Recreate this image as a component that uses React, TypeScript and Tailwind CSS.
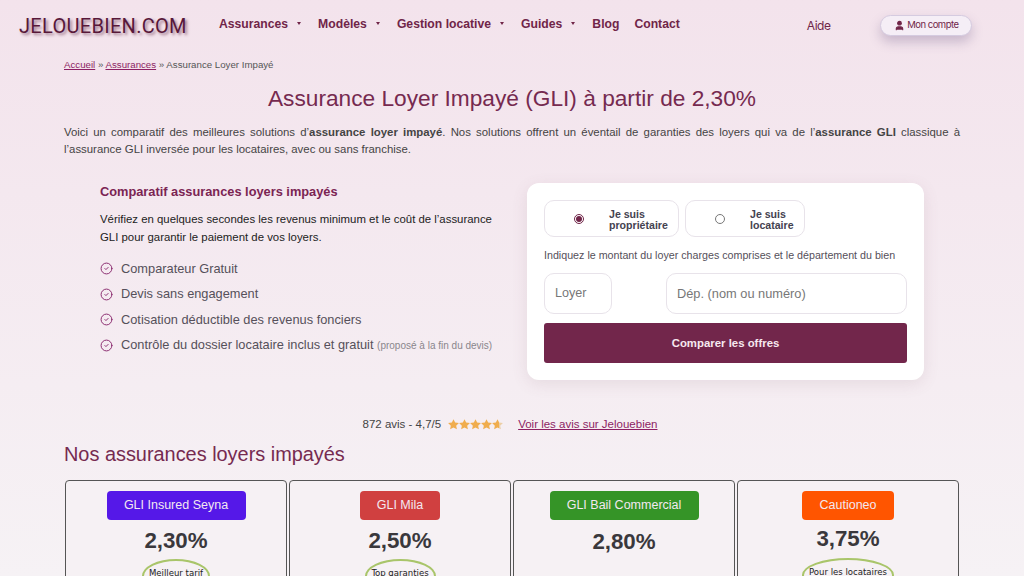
import { CircleCheck, User } from 'lucide-react'

const navItems = [
  { label: 'Assurances', caret: true },
  { label: 'Modèles', caret: true },
  { label: 'Gestion locative', caret: true },
  { label: 'Guides', caret: true },
  { label: 'Blog', caret: false },
  { label: 'Contact', caret: false },
]

const perks = ['Comparateur Gratuit', 'Devis sans engagement', 'Cotisation déductible des revenus fonciers']

const offers = [
  { name: 'GLI Insured Seyna', rate: '2,30%', color: 'bg-[#5518e8]', w: 'w-[139px]', tag: 'Meilleur tarif', tagW: 'w-[68px]', tagMt: 'mt-[3px]', rateMt: 'mt-[6px]' },
  { name: 'GLI Mila', rate: '2,50%', color: 'bg-[#d04040]', w: 'w-[80px]', tag: 'Top garanties', tagW: 'w-[71px]', tagMt: 'mt-[3px]', rateMt: 'mt-[6px]' },
  { name: 'GLI Bail Commercial', rate: '2,80%', color: 'bg-[#359427]', w: 'w-[149px]', tag: '', tagW: '', tagMt: '', rateMt: 'mt-[7px]' },
  { name: 'Cautioneo', rate: '3,75%', color: 'bg-[#ff5500]', w: 'w-[92px]', tag: 'Pour les locataires', tagW: 'w-[92px]', tagMt: 'mt-[4px]', rateMt: 'mt-[4px]' },
]

function Star({ partial }: { partial?: boolean }) {
  return (
    <svg width="11" height="11" viewBox="0 0 24 24" className="shrink-0">
      <defs>
        <linearGradient id="half-star">
          <stop offset="65%" stopColor="#f0ad4e" />
          <stop offset="65%" stopColor="#eccfa6" />
        </linearGradient>
      </defs>
      <path
        d="M12 .5l3.6 7.4 8.2 1-6 5.6 1.6 8.1L12 18.700l-7.400 3.900 1.600-8.100-6-5.600 8.200-1z"
        fill={partial ? 'url(#half-star)' : '#f0ad4e'}
      />
    </svg>
  )
}

export default function App() {
  return (
    <div className="h-[576px] overflow-hidden bg-gradient-to-b from-[#f3e3ec] to-[#f6f2f5] font-['Liberation_Sans',Arial,sans-serif] text-[#444]">
      {/* Header */}
      <header className="flex h-[51px] items-center pl-[19px] text-[#702548]">
        <div className="w-[200px] font-['Roboto',sans-serif] text-[20px] leading-none tracking-[0.3px] text-[#58183a] [text-shadow:2px_2px_3px_rgba(90,30,60,0.55)]">
          JELOUEBIEN.COM
        </div>
        <nav className="-mt-[3px] flex items-center gap-[15px] text-[12.2px] font-bold">
          {navItems.map((item) => (
            <span key={item.label} className="flex items-center">
              {item.label}
              {item.caret && <span className="ml-[9px] mr-[2px] h-0 w-0 border-x-[2.5px] border-t-[3.5px] border-x-transparent border-t-[#702548]" />}
            </span>
          ))}
        </nav>
        <span className="ml-[127px] font-['Inter',sans-serif] text-[12px] tracking-[-0.5px]">Aide</span>
        <button className="ml-[50px] flex h-[21px] w-[92px] items-center justify-center gap-[2px] rounded-full border border-[#d5cbe0] bg-[#f5eef6] font-['Inter',sans-serif] text-[9.5px] tracking-[-0.5px] shadow-[0_6px_12px_rgba(90,70,120,0.28)]">
          <User size={11} fill="currentColor" strokeWidth={2.4} />
          Mon compte
        </button>
      </header>

      <main className="px-[64px]">
        <p className="mt-[8px] text-[9.7px] leading-[12px] text-[#555]">
          <a className="text-[#8d1f63] underline">Accueil</a> » <a className="text-[#8d1f63] underline">Assurances</a> » Assurance Loyer Impayé
        </p>

        <h1 className="mt-[13px] text-center text-[22.7px] leading-[28px] text-[#762a50]">
          Assurance Loyer Impayé (GLI) à partir de 2,30%
        </h1>

        <p className="mt-[12px] text-justify text-[11.4px] leading-[17px] text-[#444]">
          Voici un comparatif des meilleures solutions d’<b>assurance loyer impayé</b>. Nos solutions offrent un éventail de garanties des loyers qui va de l’<b>assurance GLI</b> classique à l’assurance GLI inversée pour les locataires, avec ou sans franchise.
        </p>

        {/* Comparator */}
        <section className="mt-[25px] flex">
          <div className="ml-[36px] w-[427px] shrink-0 pt-[1px]">
            <h2 className="text-[12.8px] font-bold leading-[16px] text-[#7b2453]">Comparatif assurances loyers impayés</h2>
            <p className="mt-[11px] w-[400px] text-[11.4px] leading-[17.5px] text-[#222]">
              Vérifiez en quelques secondes les revenus minimum et le coût de l’assurance GLI pour garantir le paiement de vos loyers.
            </p>
            <ul className="mt-[15px] flex flex-col gap-[9.8px] text-[12.8px] leading-[15.6px] text-[#55505a]">
              {perks.map((perk) => (
                <li key={perk} className="flex items-center gap-[8px]">
                  <CircleCheck size={13} strokeWidth={1.8} className="text-[#8a2a6e]" />
                  {perk}
                </li>
              ))}
              <li className="flex items-center gap-[8px] whitespace-nowrap">
                <CircleCheck size={13} strokeWidth={1.8} className="text-[#8a2a6e]" />
                <span>
                  Contrôle du dossier locataire inclus et gratuit <span className="text-[10px] text-[#8a868c]">(proposé à la fin du devis)</span>
                </span>
              </li>
            </ul>
          </div>

          <div className="h-[197px] w-[397px] shrink-0 rounded-[12px] bg-white px-[17px] pt-[17px] shadow-[0_4px_16px_rgba(120,80,100,0.12)]">
            <div className="flex gap-[6px]">
              <label className="flex h-[37px] w-[135px] items-center rounded-[10px] border border-[#e8e3ea] pl-[29px]">
                <span className="flex h-[10px] w-[10px] items-center justify-center rounded-full border border-[#702548]">
                  <span className="h-[6px] w-[6px] rounded-full bg-[#702548]" />
                </span>
                <span className="ml-[25px] pt-[2px] text-[10.6px] font-bold leading-[11px] text-[#444250]">Je suis<br />propriétaire</span>
              </label>
              <label className="flex h-[37px] w-[120px] items-center rounded-[10px] border border-[#e8e3ea] pl-[29px]">
                <span className="h-[10px] w-[10px] rounded-full border border-[#777]" />
                <span className="ml-[25px] pt-[2px] text-[10.6px] font-bold leading-[11px] text-[#444250]">Je suis<br />locataire</span>
              </label>
            </div>
            <p className="mt-[11px] text-[10.7px] leading-[14px] text-[#55505a]">Indiquez le montant du loyer charges comprises et le département du bien</p>
            <div className="mt-[11px] flex gap-[54px]">
              <div className="flex h-[41px] w-[68px] items-center rounded-[10px] border border-[#e8e3ea] pl-[10px] text-[12.6px] text-[#777]">Loyer</div>
              <div className="flex h-[41px] w-[241px] items-center rounded-[10px] border border-[#e8e3ea] pl-[10px] text-[12.8px] text-[#777]">Dép. (nom ou numéro)</div>
            </div>
            <button className="mt-[9px] h-[40px] w-[363px] rounded-[3px] bg-[#72264b] pt-[1px] text-[11.4px] font-bold text-[#f6e8ef]">Comparer les offres</button>
          </div>
        </section>

        {/* Reviews */}
        <div className="mt-[37px] flex items-center justify-center pr-[4px] text-[11.5px] leading-[14px]">
          <span className="text-[#444]">872 avis - 4,7/5</span>
          <span className="ml-[7px] flex">
            <Star />
            <Star />
            <Star />
            <Star />
            <Star partial />
          </span>
          <a className="ml-[15px] text-[#8d1f63] underline">Voir les avis sur Jelouebien</a>
        </div>

        <h2 className="mt-[10px] text-[19.900px] leading-[26px] text-[#762a50]">Nos assurances loyers impayés</h2>

        {/* Offers */}
        <div className="ml-[1px] mt-[13px] grid w-[894px] grid-cols-4 gap-[2px]">
          {offers.map((offer) => (
            <article key={offer.name} className="flex h-[140px] flex-col items-center rounded-[4px] border border-[#555] bg-[#f6f1f4] pt-[10px]">
              <div className={`flex h-[29px] shrink-0 items-center justify-center rounded-[4px] text-[12.5px] text-[#f3e8f0] ${offer.color} ${offer.w}`}>{offer.name}</div>
              <div className={`text-[22.3px] font-bold leading-[30px] text-[#3a383c] ${offer.rateMt}`}>{offer.rate}</div>
              {offer.tag && (
                <div className={`flex h-[34px] shrink-0 items-start justify-center rounded-[50%] border-2 border-[#a9c56a] pt-[6px] font-['DejaVu_Sans_Condensed','DejaVu_Sans',sans-serif] text-[9.5px] leading-[11px] whitespace-nowrap text-[#222] ${offer.tagMt} ${offer.tagW}`}>
                  {offer.tag}
                </div>
              )}
            </article>
          ))}
        </div>
      </main>
    </div>
  )
}
